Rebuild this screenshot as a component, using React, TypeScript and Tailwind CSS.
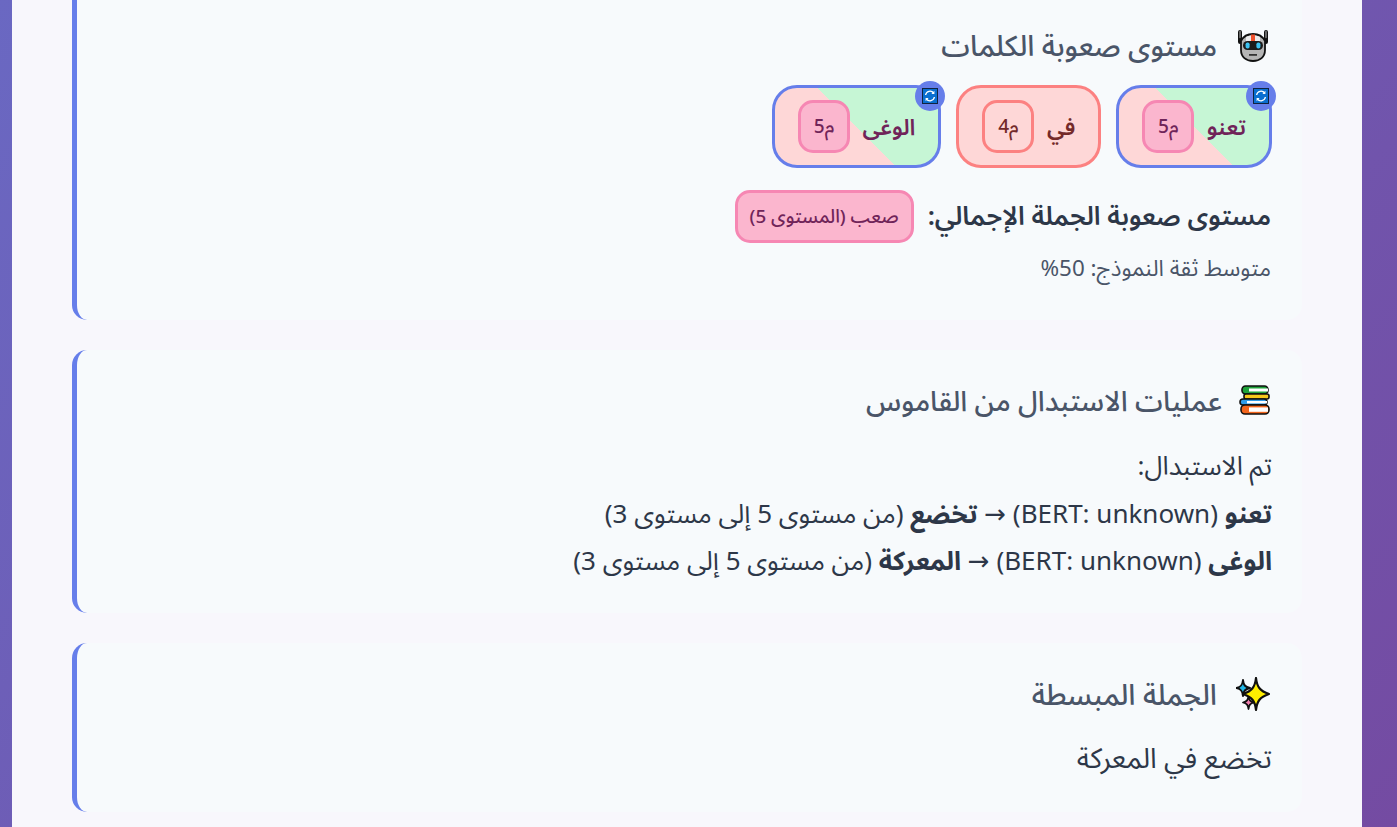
const fontStack = "font-['Noto_Sans','Noto_Sans_Arabic','DejaVu_Sans',sans-serif]";

function RobotIcon() {
  return (
    <svg width="34" height="34" viewBox="0 0 34 34">
      <path d="M4 4v10M30 4v10" stroke="#111" strokeWidth="4" strokeLinecap="round" />
      <path d="M4 3.5v6M30 3.5v6" stroke="#8a8a8a" strokeWidth="1.4" strokeLinecap="round" />
      <path d="M5 13 C8 7 12 6 17 6 C22 6 26 7 29 13 V22 C29 29 24 33 17 33 C10 33 5 29 5 22 Z" fill="#b5b5b5" stroke="#111" strokeWidth="1.8" />
      <path d="M10 9 C13 7 21 7 24 9 V14 H10 Z" fill="#ececec" />
      <rect x="15" y="6.5" width="4" height="7" fill="#f0512d" />
      <rect x="7" y="13" width="20" height="9" rx="4.5" fill="#1b1b1b" />
      <rect x="9.6" y="14.5" width="4" height="6" rx="1.8" fill="#3cc3f2" />
      <rect x="20.4" y="14.5" width="4" height="6" rx="1.8" fill="#3cc3f2" />
      <rect x="13" y="26" width="8" height="1.8" fill="#333" />
    </svg>
  );
}

function BooksIcon() {
  return (
    <svg width="31" height="34" viewBox="0 0 31 34">
      <rect x="3" y="3" width="26" height="8" rx="3.5" fill="#1fa23a" stroke="#111" strokeWidth="1.6" />
      <rect x="10" y="5.5" width="19" height="3" fill="#fff" />
      <rect x="5" y="11" width="25" height="5" rx="2" fill="#f6c71c" stroke="#111" strokeWidth="1.6" />
      <rect x="1" y="16" width="27" height="6" rx="3" fill="#2f9be8" stroke="#111" strokeWidth="1.6" />
      <rect x="8" y="18" width="20" height="2.4" fill="#fff" />
      <rect x="2" y="22" width="28" height="9" rx="4" fill="#f2651c" stroke="#111" strokeWidth="1.6" />
      <rect x="10" y="24.4" width="19" height="4.4" fill="#fff" />
    </svg>
  );
}

function SparklesIcon() {
  return (
    <svg width="34" height="34" viewBox="0 0 34 34">
      <path d="M7 3 C7.5 8 9 10 14 11 C9 12 7.5 14 7 19 C6.5 14 5 12 0.5 11 C5 10 6.5 8 7 3 Z" fill="#22b8e8" stroke="#111" strokeWidth="2" strokeLinejoin="round" />
      <path d="M12.5 19 C13 23 14 24.5 18 25.5 C14 26.5 13 28 12.5 32 C12 28 11 26.5 7 25.5 C11 24.5 12 23 12.5 19 Z" fill="#f47fb0" stroke="#111" strokeWidth="1.8" strokeLinejoin="round" />
      <path d="M20 1 C21 10 24 14 33 17 C24 20 21 24 20 33 C19 24 16 20 7 17 C16 14 19 10 20 1 Z" fill="#ffee00" stroke="#111" strokeWidth="2.2" strokeLinejoin="round" />
    </svg>
  );
}

function RefreshBadge() {
  return (
    <span className="absolute -top-[7px] -right-[7px] w-[30px] h-[30px] rounded-full bg-[#667eea] flex items-center justify-center">
      <svg width="16" height="16" viewBox="0 0 16 16">
        <rect x="0.5" y="0.5" width="15" height="15" fill="#0a6fd0" stroke="#10233f" />
        <path d="M3.6 7 A4.5 4.5 0 0 1 11.6 5 M12.4 9 A4.5 4.5 0 0 1 4.4 11" fill="none" stroke="#fff" strokeWidth="1.3" />
        <path d="M12.4 2.8 V6 H9.4 Z M3.6 13.2 V10 H6.6 Z" fill="#fff" />
      </svg>
    </span>
  );
}

function WordCard({ word, level, replaced }: { word: string; level: string; replaced: boolean }) {
  const easy = level === 'م4';
  return (
    <div
      className={
        replaced
          ? 'relative flex items-center gap-[12.6px] rounded-[25px] border-[3px] border-[#667eea] px-[23px] py-[12px] text-[#702459] bg-[linear-gradient(45deg,#fed7d7_50%,#c6f6d5_50%)]'
          : 'relative flex items-center gap-[12.6px] rounded-[25px] border-[3px] border-[#fc8181] px-[23px] py-[12px] text-[#742a2a] bg-[#fed7d7]'
      }
    >
      <span className="text-[22.4px] font-semibold leading-[29px]">{word}</span>
      <span
        className={
          easy
            ? 'w-[52px] h-[53px] rounded-[15px] border-[3px] border-[#fc8181] bg-[#fed7d7] flex items-center justify-center text-[19px] font-medium'
            : 'w-[52px] h-[53px] rounded-[15px] border-[3px] border-[#f687b3] bg-[#fbb6ce] flex items-center justify-center text-[19px] font-medium'
        }
      >
        {level}
      </span>
      {replaced && <RefreshBadge />}
    </div>
  );
}

function Heading({ icon, title, narrow }: { icon: React.ReactNode; title: string; narrow?: boolean }) {
  return (
    <div className={narrow ? 'flex items-center gap-[17px] text-[#4a5568] text-[28px] font-medium leading-[34px]' : 'flex items-center gap-[17px] text-[#4a5568] text-[28.8px] font-medium leading-[34px]'}>
      <span className={narrow ? 'w-[33px] h-[34px] pr-[2px] flex-none' : 'w-[38px] h-[34px] pr-[2px] flex-none'}>{icon}</span>
      <h3>{title}</h3>
    </div>
  );
}

export default function App() {
  return (
    <div className={`h-[827px] overflow-hidden bg-[linear-gradient(135deg,#6a68c2_0%,#744ba2_100%)] ${fontStack}`} dir="rtl">
      <div className="mr-[35px] ml-[12px] h-full bg-[#f8f7fc] px-[60px] flex flex-col gap-[30px]">
        <section className="relative -mt-[20px] h-[340px] flex-none bg-[#f7fafc] rounded-[15px] border-l-[5px] border-[#667eea] pt-[48px] px-[30px]">
          <Heading icon={<RobotIcon />} title="مستوى صعوبة الكلمات" />
          <div className="flex gap-[15px] mt-[23px]">
            <WordCard word="تعنو" level="م5" replaced />
            <WordCard word="في" level="م4" replaced={false} />
            <WordCard word="الوغى" level="م5" replaced />
          </div>
          <div className="flex items-center gap-[14px] mt-[22px]">
            <strong className="text-[26px] text-[#2d3748] font-semibold pb-[3px] pr-[1px]">مستوى صعوبة الجملة الإجمالي:</strong>
            <span className="h-[53px] rounded-[15px] border-[3px] border-[#f687b3] bg-[#fbb6ce] text-[#702459] text-[18.8px] font-medium px-[12px] flex items-center">صعب (المستوى 5)</span>
          </div>
          <p className="mt-[11px] pr-[1px] text-[22.4px] leading-[28px] text-[#4a5568]">متوسط ثقة النموذج: 50%</p>
        </section>

        <section className="h-[263px] flex-none bg-[#f7fafc] rounded-[15px] border-l-[5px] border-[#667eea] pt-[33px] px-[30px]">
          <Heading icon={<BooksIcon />} title="عمليات الاستبدال من القاموس" narrow />
          <div className="mt-[25px] text-[26px] leading-[47.5px] text-[#2d3748]">
            <p>تم الاستبدال:</p>
            <p><strong className="font-bold">تعنو</strong> (BERT: unknown) → <strong className="font-bold">تخضع</strong> (من مستوى 5 إلى مستوى 3)</p>
            <p><strong className="font-bold">الوغى</strong> (BERT: unknown) → <strong className="font-bold">المعركة</strong> (من مستوى 5 إلى مستوى 3)</p>
          </div>
        </section>

        <section className="h-[169px] flex-none bg-[#f7fafc] rounded-[15px] border-l-[5px] border-[#667eea] pt-[34px] px-[30px]">
          <Heading icon={<SparklesIcon />} title="الجملة المبسطة" />
          <p className="mt-[23px] text-[28px] leading-[47.5px] text-[#2d3748]">تخضع في المعركة</p>
        </section>
      </div>
    </div>
  );
}
